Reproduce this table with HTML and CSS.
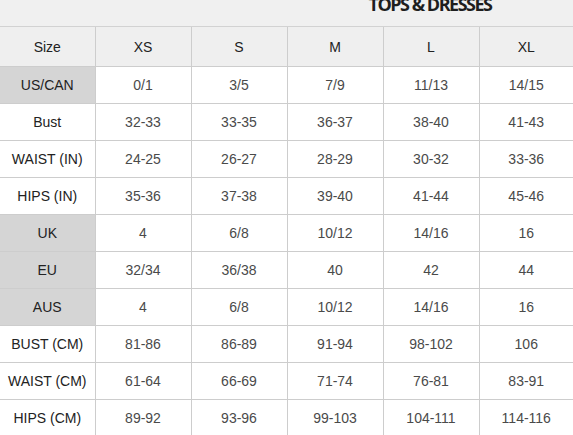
FILE: index.html
```html
<!DOCTYPE html>
<html>
<head>
<meta charset="utf-8">
<link rel="stylesheet" href="styles.css">
</head>
<body>
<div class="chart">
  <div class="title-bar">
    <div class="title-spacer"></div>
    <div class="title">TOPS &amp; DRESSES</div>
  </div>
  <table class="sizes">
    <colgroup>
      <col class="c-label"><col class="c-size"><col class="c-size"><col class="c-size"><col class="c-size"><col class="c-last">
    </colgroup>
    <thead>
      <tr class="head"><th>Size</th><th>XS</th><th>S</th><th>M</th><th>L</th><th>XL</th></tr>
    </thead>
    <tbody>
      <tr><th class="shaded">US/CAN</th><td>0/1</td><td>3/5</td><td>7/9</td><td>11/13</td><td>14/15</td></tr>
      <tr><th>Bust</th><td>32-33</td><td>33-35</td><td>36-37</td><td>38-40</td><td>41-43</td></tr>
      <tr><th>WAIST (IN)</th><td>24-25</td><td>26-27</td><td>28-29</td><td>30-32</td><td>33-36</td></tr>
      <tr><th>HIPS (IN)</th><td>35-36</td><td>37-38</td><td>39-40</td><td>41-44</td><td>45-46</td></tr>
      <tr><th class="shaded">UK</th><td>4</td><td>6/8</td><td>10/12</td><td>14/16</td><td>16</td></tr>
      <tr><th class="shaded">EU</th><td>32/34</td><td>36/38</td><td>40</td><td>42</td><td>44</td></tr>
      <tr><th class="shaded">AUS</th><td>4</td><td>6/8</td><td>10/12</td><td>14/16</td><td>16</td></tr>
      <tr><th>BUST (CM)</th><td>81-86</td><td>86-89</td><td>91-94</td><td>98-102</td><td>106</td></tr>
      <tr><th>WAIST (CM)</th><td>61-64</td><td>66-69</td><td>71-74</td><td>76-81</td><td>83-91</td></tr>
      <tr><th>HIPS (CM)</th><td>89-92</td><td>93-96</td><td>99-103</td><td>104-111</td><td>114-116</td></tr>
    </tbody>
  </table>
</div>
</body>
</html>
```

FILE: styles.css
```css
html, body {
  margin: 0;
  padding: 0;
  background: #ffffff;
}

.chart {
  width: 573px;
  height: 435px;
  overflow: hidden;
  font-family: "Liberation Sans", Arial, sans-serif;
}

.title-bar {
  display: grid;
  grid-template-columns: 287px 1fr;
  height: 26px;
  background: #f0f0f0;
  border-bottom: 1px solid #d2d2d2;
  overflow: hidden;
}

.title {
  text-align: center;
  font-family: "Open Sans", sans-serif;
  font-weight: 700;
  font-size: 18px;
  letter-spacing: -1.5px;
  line-height: 8px;
  color: #1e1e1e;
}

.sizes {
  width: 573px;
  table-layout: fixed;
  border-collapse: collapse;
  border-style: hidden;
}

.c-label { width: 95px; }
.c-size { width: 96px; }
.c-last { width: 94px; }

.sizes th,
.sizes td {
  border: 1px solid #cdcdcd;
  height: 36px;
  padding: 0;
  text-align: center;
  vertical-align: middle;
  font-size: 14px;
  font-weight: 400;
}

.sizes th {
  color: #222222;
}

.sizes td {
  color: #4a4a4a;
}

.head th {
  background: #efefef;
  height: 39px;
}

.sizes th.shaded {
  background: #d5d5d5;
}
```
